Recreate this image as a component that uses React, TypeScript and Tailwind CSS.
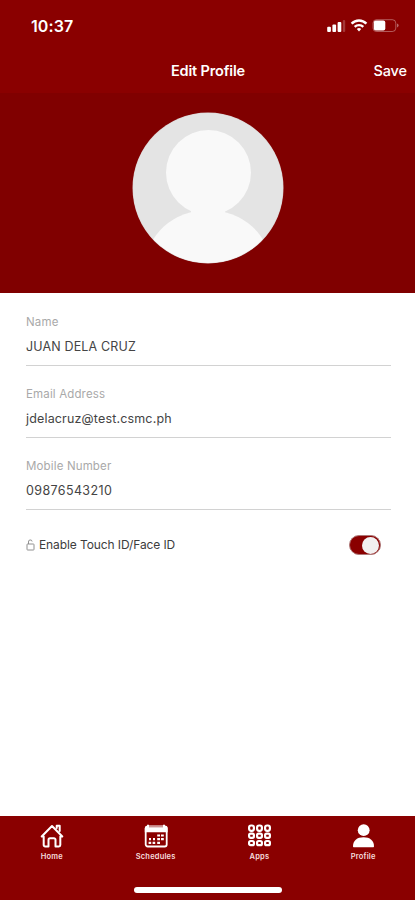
import React from "react";

function StatusIcons() {
  return (
    <svg width="74" height="16" viewBox="0 0 74 16" fill="none">
      <g fill="#fff">
        <rect x="1.2" y="8.8" width="3.7" height="5.2" rx="1" />
        <rect x="6.4" y="6.6" width="3.7" height="7.4" rx="1" />
        <rect x="11.6" y="4" width="3.7" height="10" rx="1" />
        <rect x="16.8" y="2" width="2.4" height="12" rx="1" opacity="0.22" />
      </g>
      <g stroke="#fff" strokeWidth="2.4">
        <path d="M25.6 5.6a10.3 10.3 0 0 1 14.8 0" />
        <path d="M28.7 8.9a6.1 6.1 0 0 1 8.6 0" />
      </g>
      <path d="M30.8 11a3.2 3.2 0 0 1 4.4 0L33 13.6z" fill="#fff" />
      <rect x="47" y="1.7" width="22.8" height="11.8" rx="3.4" stroke="#fff" strokeOpacity="0.35" />
      <rect x="47.8" y="2.6" width="11.5" height="10" rx="2" fill="#fff" />
      <path d="M71.2 5.6c1.8.6 1.8 3.2 0 3.9z" fill="#fff" opacity="0.5" />
    </svg>
  );
}

function Avatar() {
  return (
    <svg width="152" height="152" viewBox="0 0 152 152">
      <clipPath id="avatar">
        <circle cx="76" cy="76" r="75" />
      </clipPath>
      <circle cx="76" cy="76" r="75.5" fill="#d9cfcf" />
      <g clipPath="url(#avatar)">
        <rect width="152" height="152" fill="#e4e4e4" />
        <circle cx="76.5" cy="60.5" r="42.5" fill="#f9f9f9" />
        <ellipse cx="76" cy="153.5" rx="62" ry="55.5" fill="#f9f9f9" />
        <path d="M59 97h34v8H59z" fill="#f9f9f9" />
      </g>
    </svg>
  );
}

function Field({ label, value, valueClass }: { label: string; value: string; valueClass: string }) {
  return (
    <div className="h-[72px] border-b border-[#d2d2d2]">
      <div className="pt-5 text-[11.5px] leading-4 tracking-[0.15px] text-[#a9a9a9]">{label}</div>
      <div className={`mt-[9px] text-[12.5px] leading-4 text-[#444] ${valueClass}`}>{value}</div>
    </div>
  );
}

function HomeIcon() {
  return (
    <svg width="24" height="24" viewBox="0 0 24 24" fill="none" stroke="#fff" strokeWidth="2" strokeLinejoin="round" strokeLinecap="round">
      <path d="M1.7 12.5 12 2l10.3 10.5h-2V21a1.4 1.4 0 0 1-1.4 1.4h-3.4v-6.6a1.5 1.5 0 0 0-1.5-1.5h-4a1.5 1.5 0 0 0-1.5 1.5v6.6H5.1A1.4 1.4 0 0 1 3.7 21v-8.5z" />
      <path d="M16.7 4V1.8h3V7" />
    </svg>
  );
}

function CalendarIcon() {
  return (
    <svg width="24" height="24" viewBox="0 0 24 24" fill="none">
      <rect x="1.7" y="2.5" width="21" height="20" rx="2" stroke="#fff" strokeWidth="1.8" />
      <path d="M.8 4a2 2 0 0 1 2-2h18.8a2 2 0 0 1 2 2v4.2H.8z" fill="#fff" />
      <path d="M4 .8v3M20 .8v3" stroke="#fff" strokeWidth="2" />
      <path d="M5 2.8h14" stroke="#8a0000" strokeWidth="1" opacity=".6" />
      <g fill="#fff">
        <path d="M13.2 10.4h2.8v2.2h-2.8zM17 10.4h2.8v2.2H17zM13.2 14h2.8v2.2h-2.8zM17 14h2.8v2.2H17zM5 14h2v2.2H5zM9 14h2v2.2H9z" />
        <path d="M4.6 17.7h2.6v2.2H4.6zM8.6 17.7h2.6v2.2H8.6zM13.2 17.7h2.8v2.2h-2.8z" />
      </g>
    </svg>
  );
}

function AppsIcon() {
  return (
    <svg width="24" height="24" viewBox="0 0 24 24" fill="none" stroke="#fff" strokeWidth="2.2">
      {[4.5, 12.5, 20.5].map((x) => (
        <g key={x}>
          <rect x={x - 2.4} y="1.5" width="4.8" height="5.3" rx="2" />
          <rect x={x - 2.4} y="9.6" width="4.8" height="4.2" rx="1.5" />
          <rect x={x - 2.4} y="17" width="4.8" height="4.2" rx="1.5" />
        </g>
      ))}
    </svg>
  );
}

function ProfileIcon() {
  return (
    <svg width="24" height="24" viewBox="0 0 24 24" fill="#fff">
      <circle cx="12.7" cy="6.2" r="5.9" />
      <path d="M2 22.3c0-5.6 4-9 10.5-9S23 16.700 23 22.3c0 .7-.4 1-1 1H3c-.6 0-1-.3-1-1z" />
    </svg>
  );
}

function Tab({ icon, label }: { icon: React.ReactNode; label: string }) {
  return (
    <div className="flex w-[103.75px] flex-col items-center pt-2">
      {icon}
      <span className="mt-1 text-[7.5px] font-semibold leading-[10px] tracking-[0.2px] text-[#f7dede]">{label}</span>
    </div>
  );
}

export default function App() {
  return (
    <div className="flex h-[900px] w-full flex-col overflow-hidden bg-white font-['Inter','Liberation_Sans',sans-serif]">
      <header className="h-[93px] shrink-0 bg-[#8a0000] text-white">
        <div className="flex h-[50px] items-start justify-between pl-[31px] pr-[15px] pt-[18px]">
          <span className="text-[16px] font-semibold leading-4 tracking-[0.1px]">10:37</span>
          <StatusIcons />
        </div>
        <div className="grid grid-cols-[1fr_auto_1fr] items-center pr-2 leading-[42px]">
          <span />
          <span className="ml-[9px] text-[14.5px] font-semibold leading-[42px] tracking-[-0.15px]">Edit Profile</span>
          <span className="text-right text-[14.5px] font-medium leading-[42px] tracking-[-0.1px]">Save</span>
        </div>
      </header>
      <section className="flex h-[200px] shrink-0 justify-center bg-[#800000] pt-[19px]">
        <Avatar />
      </section>
      <main className="flex-1 pl-[26px] pr-6">
        <div className="h-px" />
        <Field label="Name" value="JUAN DELA CRUZ" valueClass="tracking-[0.15px]" />
        <Field label="Email Address" value="jdelacruz@test.csmc.ph" valueClass="tracking-[0.16px]" />
        <Field label="Mobile Number" value="09876543210" valueClass="tracking-[0.38px]" />
        <div className="flex h-[70px] items-center">
          <svg width="9" height="12" viewBox="0 0 9 12" fill="none" stroke="#858585" strokeWidth="0.9">
            <rect x="1" y="5" width="7" height="6" rx="0.6" />
            <path d="M2.5 5V3a1.8 1.8 0 0 1 3.6-.5" />
          </svg>
          <span className="ml-[4px] text-[12px] leading-4 tracking-[-0.1px] text-[#3d3d3d]">Enable Touch ID/Face ID</span>
          <div className="ml-auto mr-[10px] flex h-[20px] w-[32px] items-center justify-end rounded-full border border-[#ae7777] bg-[#8a0000] pr-px">
            <div className="size-[17px] rounded-full bg-[#f2f0f0]" />
          </div>
        </div>
      </main>
      <footer className="flex h-[84px] shrink-0 flex-col bg-[#8a0000]">
        <nav className="flex h-[71px]">
          <Tab icon={<HomeIcon />} label="Home" />
          <Tab icon={<CalendarIcon />} label="Schedules" />
          <Tab icon={<AppsIcon />} label="Apps" />
          <Tab icon={<ProfileIcon />} label="Profile" />
        </nav>
        <div className="mx-auto h-[6px] w-[148px] rounded-full bg-white" />
      </footer>
    </div>
  );
}
